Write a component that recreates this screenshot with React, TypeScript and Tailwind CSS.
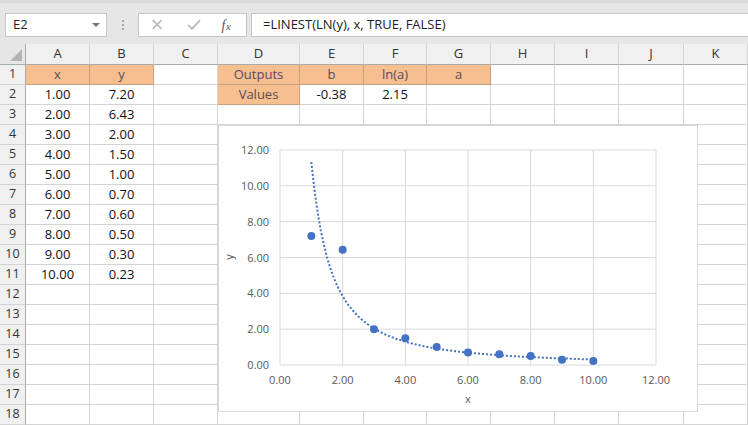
import React from "react"

const font = { fontFamily: '"Open Sans", "Liberation Sans", sans-serif' }

const colWidths = [26, 64, 64, 64, 82, 64, 63, 64, 64, 64, 65, 64]
const letters = ["A", "B", "C", "D", "E", "F", "G", "H", "I", "J", "K"]

const xs = [1, 2, 3, 4, 5, 6, 7, 8, 9, 10]
const ys = [7.2, 6.43, 2, 1.5, 1, 0.7, 0.6, 0.5, 0.3, 0.23]

type Cell = { text: string; orange?: boolean }

function buildRows(): Cell[][] {
  const rows: Cell[][] = []
  for (let r = 1; r <= 18; r++) {
    const row: Cell[] = letters.map(() => ({ text: "" }))
    if (r === 1) {
      row[0] = { text: "x", orange: true }
      row[1] = { text: "y", orange: true }
      row[3] = { text: "Outputs", orange: true }
      row[4] = { text: "b", orange: true }
      row[5] = { text: "ln(a)", orange: true }
      row[6] = { text: "a", orange: true }
    } else if (r <= 11) {
      row[0] = { text: xs[r - 2].toFixed(2) }
      row[1] = { text: ys[r - 2].toFixed(2) }
    }
    if (r === 2) {
      row[3] = { text: "Values", orange: true }
      row[4] = { text: "-0.38" }
      row[5] = { text: "2.15" }
    }
    rows.push(row)
  }
  return rows
}

function Toolbar() {
  return (
    <div className="flex h-[44px] items-start bg-[#e6e6e6] pt-[10px] border-t-[3px] border-[#d9d9d9]" style={font}>
      <div className="ml-[5px] flex h-[24px] w-[102px] items-center justify-between border border-[#c6c6c6] bg-white pl-[7px] pr-[6px] text-[13px] text-[#222]">
        <span>E2</span>
        <span className="h-0 w-0 border-x-[4px] border-t-[4px] border-x-transparent border-t-[#777]" />
      </div>
      <div className="flex h-[24px] w-[31px] flex-col items-center justify-center gap-[2px]">
        <span className="h-[2px] w-[2px] bg-[#a8a8a8]" />
        <span className="h-[2px] w-[2px] bg-[#a8a8a8]" />
        <span className="h-[2px] w-[2px] bg-[#a8a8a8]" />
      </div>
      <div className="flex h-[24px] w-[109px] items-center border border-[#c6c6c6] bg-white">
        <svg width="109" height="22" viewBox="0 0 109 22">
          <path d="M14 6 L23 15 M23 6 L14 15" stroke="#b9b9b9" strokeWidth="1.6" />
          <path d="M50 11 L54 15 L62 6" stroke="#bdbdbd" strokeWidth="2" fill="none" />
          <text x="84" y="16" fontSize="14" fontStyle="italic" fontFamily='"Liberation Serif", serif' fill="#555">f</text>
          <text x="88.5" y="16" fontSize="11" fontStyle="italic" fontFamily='"Liberation Serif", serif' fill="#555">x</text>
        </svg>
      </div>
      <div className="ml-[4px] flex h-[24px] flex-1 items-center border border-[#c6c6c6] border-r-0 bg-white pl-[11px] text-[13px] text-[#222]">
        =LINEST(LN(y), x, TRUE, FALSE)
      </div>
    </div>
  )
}

function Chart() {
  const X0 = 61
  const X1 = 437
  const Y0 = 239
  const Y1 = 24
  const px = (x: number) => X0 + ((X1 - X0) * x) / 12
  const py = (y: number) => Y0 - ((Y0 - Y1) * y) / 12
  const ticks = [0, 2, 4, 6, 8, 10, 12]
  // power trendline y = 11.33 * x^-1.561
  let d = ""
  for (let i = 0; i <= 90; i++) {
    const x = 1 + i * 0.1
    const y = 11.33 * Math.pow(x, -1.561)
    d += (i === 0 ? "M" : "L") + px(x).toFixed(1) + " " + py(y).toFixed(1) + " "
  }
  return (
    <div className="absolute left-[218px] top-[125px] h-[287px] w-[480px] border border-[#d9d9d9] bg-white">
      <svg width="478" height="285" viewBox="0 0 478 285" style={font}>
        {ticks.map((t) => (
          <line key={"h" + t} x1={X0} x2={X1} y1={py(t)} y2={py(t)} stroke="#d9d9d9" strokeWidth="1" />
        ))}
        {ticks.map((t) => (
          <line key={"v" + t} x1={px(t)} x2={px(t)} y1={Y1} y2={Y0} stroke="#d9d9d9" strokeWidth="1" />
        ))}
        {ticks.map((t) => (
          <text key={"yl" + t} x={50} y={py(t) + 4} textAnchor="end" fontSize="11" fill="#595959">
            {t.toFixed(2)}
          </text>
        ))}
        {ticks.map((t) => (
          <text key={"xl" + t} x={px(t)} y={258} textAnchor="middle" fontSize="11" fill="#595959">
            {t.toFixed(2)}
          </text>
        ))}
        <text x={249} y={277} textAnchor="middle" fontSize="11" fill="#595959">x</text>
        <text x={14} y={131} textAnchor="middle" fontSize="11" fill="#595959" transform="rotate(-90 14 131)">y</text>
        <path d={d} fill="none" stroke="#4472c4" strokeWidth="2" strokeDasharray="2 2" />
        {xs.map((x, i) => (
          <circle key={x} cx={px(x)} cy={py(ys[i])} r="4" fill="#4472c4" />
        ))}
      </svg>
    </div>
  )
}

export default function App() {
  const rows = buildRows()
  return (
    <div className="relative h-[425px] w-[748px] overflow-hidden bg-white" style={font}>
      <Toolbar />
      <div
        className="grid"
        style={{ gridTemplateColumns: colWidths.map((w) => w + "px").join(" ") }}
      >
        <div className="flex h-[21px] items-end justify-end border-b border-r border-[#ababab] bg-[#e6e6e6] p-[3px]">
          <svg width="12" height="12" viewBox="0 0 12 12">
            <path d="M12 0 L12 12 L0 12 Z" fill="#b4b4b4" />
          </svg>
        </div>
        {letters.map((l) => (
          <div
            key={l}
            className="flex h-[21px] items-center justify-center border-b border-r border-b-[#ababab] border-r-[#d4d4d4] bg-[#f0f0f0] text-[13px] text-[#333]"
          >
            {l}
          </div>
        ))}
        {rows.map((row, ri) => (
          <React.Fragment key={ri}>
            <div className="flex h-[20px] items-center justify-center border-b border-r border-b-[#d4d4d4] border-r-[#ababab] bg-[#f0f0f0] text-[12.5px] text-[#333]">
              {ri + 1}
            </div>
            {row.map((c, ci) => (
              <div
                key={ci}
                className={
                  c.orange
                    ? "flex h-[20px] items-center justify-center border-b border-r border-[#c99f7c] bg-[#f6bf90] text-[13px] text-[#5a4b5a]"
                    : "flex h-[20px] items-center justify-center border-b border-r border-[#d4d4d4] bg-white text-[13px] text-[#111]"
                }
              >
                {c.text}
              </div>
            ))}
          </React.Fragment>
        ))}
      </div>
      <Chart />
    </div>
  )
}
